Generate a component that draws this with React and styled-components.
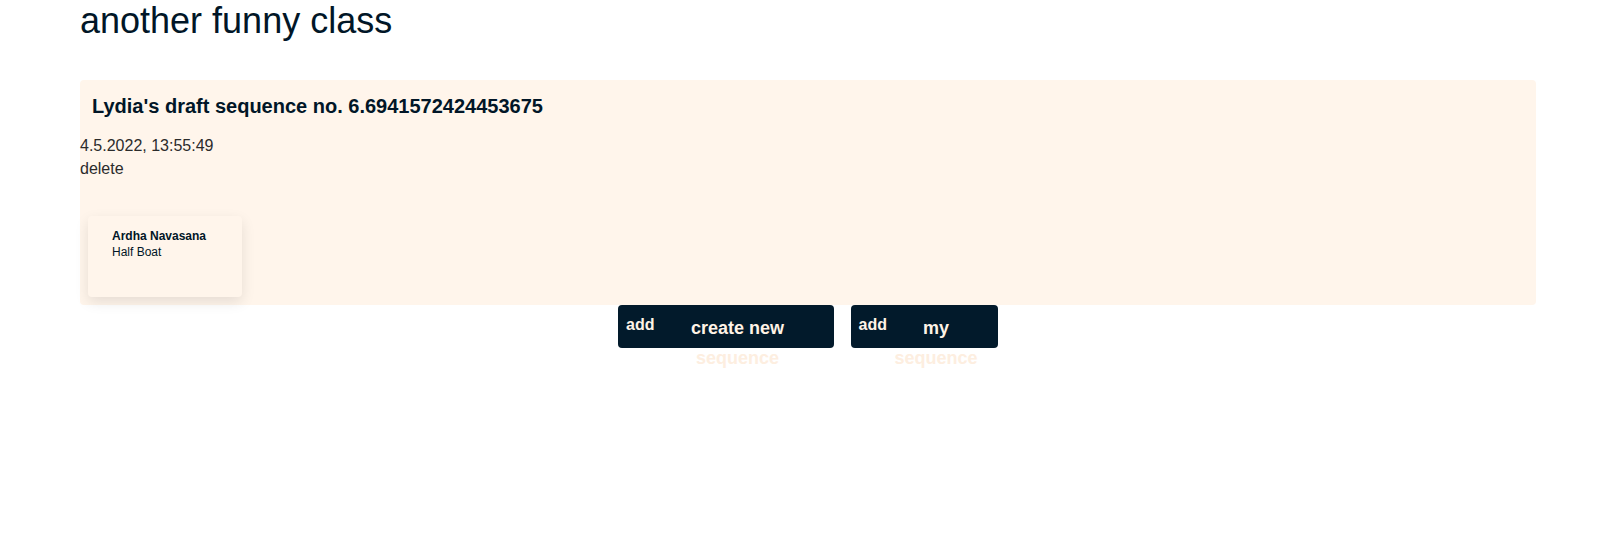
import React from 'react';
import styled, { createGlobalStyle } from 'styled-components';

const GlobalStyle = createGlobalStyle`
  body {
    margin: 0;
    background: #fff;
    font-family: "Liberation Sans", Arial, sans-serif;
  }
  #root {
    min-height: 100vh;
  }
`

const Page = styled.div`
  min-height: 100vh;
  padding: 0 80px;
`
const Title = styled.h1`
  margin: 0 0 38px;
  font-size: 36px;
  font-weight: 400;
  color: #011627;
`
const Sequence = styled.div`
  background-color: #fff5eb;
  border-radius: 4px;
  padding-bottom: 8px;
`
const SequenceTitle = styled.h3`
  margin: 0 0 16px;
  padding: 15px 12px 0;
  font-size: 20px;
  line-height: 23px;
  font-weight: 700;
  color: #011627;
`
const Meta = styled.div`
  font-size: 16px;
  line-height: 23px;
  color: #2b2b2b;
`
const Poses = styled.div`
  display: flex;
  gap: 12px;
  margin-top: 36px;
  padding-left: 8px;
`
const PoseCard = styled.div`
  box-sizing: border-box;
  width: 154px;
  height: 81px;
  padding: 12px 24px;
  border-radius: 4px;
  background-color: #fff5eb;
  box-shadow: 0 5px 14px rgba(0, 0, 0, 0.1);
  color: #011627;
  font-size: 12px;
  line-height: 16px;
`
const PoseName = styled.div`
  font-weight: 700;
`
const Actions = styled.div`
  display: flex;
  justify-content: center;
  align-items: flex-start;
  gap: 17px;
  padding-bottom: 40px;
`
const Button = styled.div`
  box-sizing: border-box;
  display: flex;
  align-items: flex-start;
  height: 43px;
  padding: 8px 13px 0 8px;
  border-radius: 4px;
  background-color: #021a2b;
  color: #fff3e6;
  font-weight: 700;
  cursor: pointer;
`
const Icon = styled.span`
  margin-top: 3px;
  font-size: 16px;
  line-height: 18.4px;
`
const Label = styled.div`
  width: ${p => p.$width}px;
  font-size: 18px;
  line-height: 30px;
  text-align: center;
`
const Overflow = styled.span`
  color: #fdeee0;
`

const poses = [{ sanskrit: 'Ardha Navasana', english: 'Half Boat' }]

const App = () => (
  <>
    <GlobalStyle />
    <Page>
      <Title>another funny class</Title>
      <Sequence>
        <SequenceTitle>Lydia's draft sequence no. 6.6941572424453675</SequenceTitle>
        <Meta>4.5.2022, 13:55:49</Meta>
        <Meta>delete</Meta>
        <Poses>
          {poses.map(pose => (
            <PoseCard key={pose.sanskrit}>
              <PoseName>{pose.sanskrit}</PoseName>
              <div>{pose.english}</div>
            </PoseCard>
          ))}
        </Poses>
      </Sequence>
      <Actions>
        <Button role="button">
          <Icon>add</Icon>
          <Label $width={166}>create new <Overflow>sequence</Overflow></Label>
        </Button>
        <Button role="button">
          <Icon>add</Icon>
          <Label $width={98}>my <Overflow>sequence</Overflow></Label>
        </Button>
      </Actions>
    </Page>
  </>
)

export default App;
